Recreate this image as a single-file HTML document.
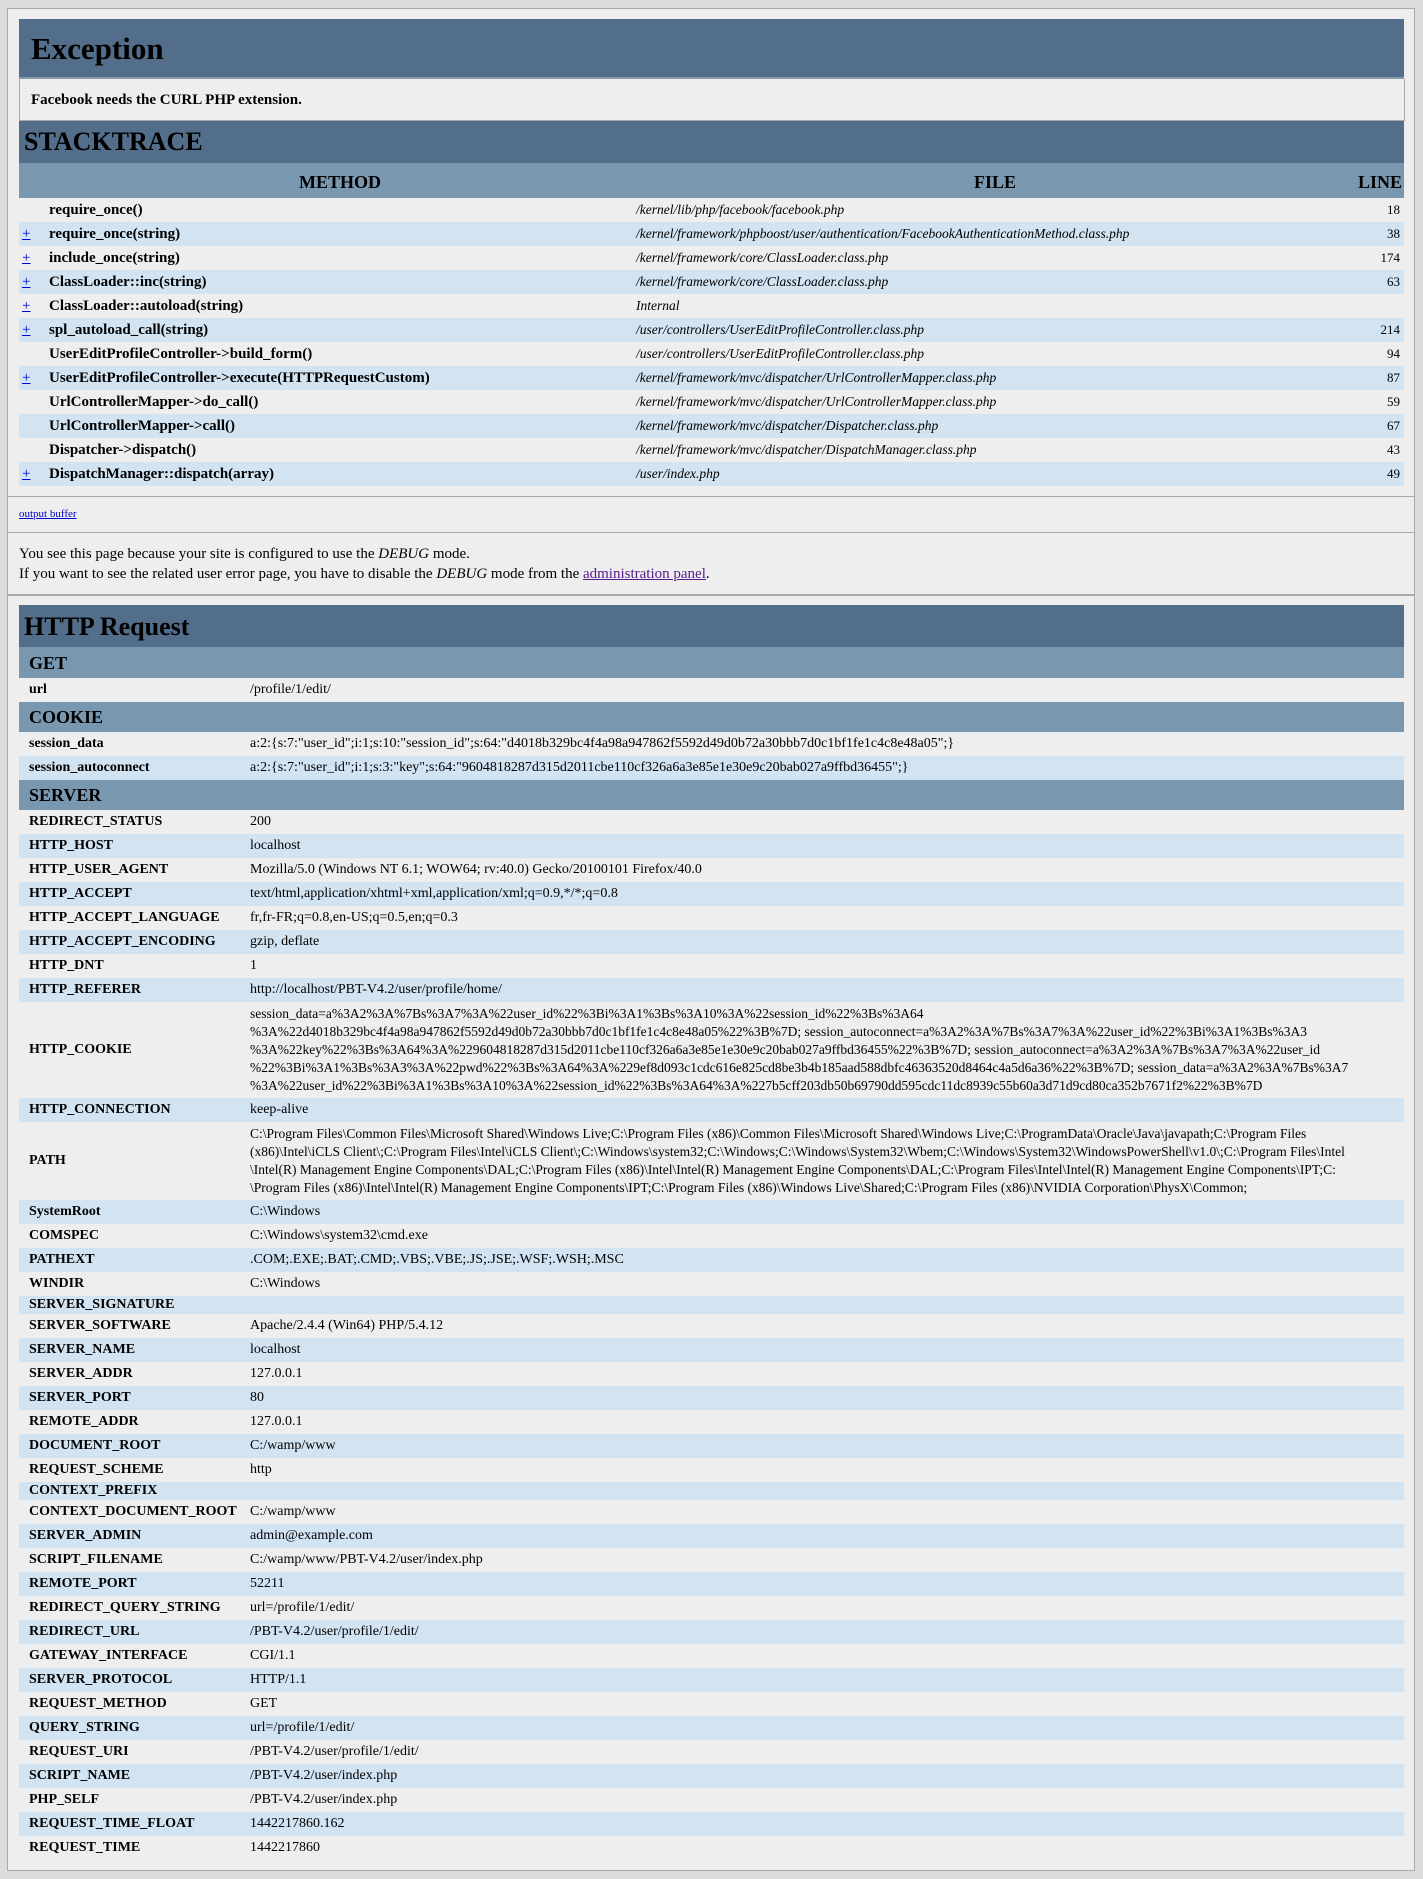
<!DOCTYPE html>
<html><head><meta charset="utf-8"><style>
html,body{margin:0;padding:0;background:#dcdcdc;}
body{width:1423px;height:1879px;position:relative;font-family:"Liberation Serif",serif;color:#000;}
#box{position:absolute;left:7px;top:8px;width:1406px;height:1861px;background:#eee;border:1px solid #aaa;}
.abs{position:absolute;}
.dark{background:#536e8a;}
.mid{background:#7a97b0;}
.blue{background:#d2e3f2;}
.row{position:absolute;left:19px;width:1385px;height:24px;font-size:15px;line-height:24px;white-space:nowrap;}
.row .plus{position:absolute;left:3px;color:#00c;text-decoration:underline;}
.row .m{position:absolute;left:30px;font-weight:bold;}
.row .f{position:absolute;left:617px;font-style:italic;font-size:13.5px;}
.row .l{position:absolute;right:4px;font-size:13px;}
table.kv{position:absolute;left:19px;width:1385px;border-collapse:collapse;font-size:14px;}
table.kv td{padding:0;height:24px;line-height:18px;vertical-align:middle;white-space:nowrap;}
table.kv td.k{font-weight:bold;width:221px;padding-left:10px;}
table.kv tr:nth-child(even){background:#d2e3f2;}
table.kv tr.e td{height:18px;}
</style></head><body>
<div id="box"></div>
<div class="abs dark" style="left:19px;top:19px;width:1385px;height:58px;border-bottom:2px solid #8a9aaa;"></div>
<div class="abs" style="left:31px;top:27px;font-size:31px;font-weight:bold;line-height:44px;">Exception</div>
<div class="abs" style="left:19px;top:79px;width:1384px;height:41px;border:1px solid #aaa;border-top:none;background:#eee;"></div>
<div class="abs" style="left:31px;top:90px;font-size:15px;font-weight:bold;line-height:20px;">Facebook needs the CURL PHP extension.</div>
<div class="abs dark" style="left:19px;top:121px;width:1385px;height:42px;"></div>
<div class="abs" style="left:24px;top:125px;font-size:26px;font-weight:bold;line-height:34px;">STACKTRACE</div>
<div class="abs mid" style="left:19px;top:163px;width:1385px;height:35px;font-size:18px;font-weight:bold;line-height:38px;">
<span class="abs" style="left:280px;">METHOD</span><span class="abs" style="left:955px;">FILE</span><span class="abs" style="right:2px;">LINE</span></div>

<div class="row" style="top:198px"><span class="m">require_once()</span><span class="f">/kernel/lib/php/facebook/facebook.php</span><span class="l">18</span></div>
<div class="row blue" style="top:222px"><span class="plus">+</span><span class="m">require_once(string)</span><span class="f">/kernel/framework/phpboost/user/authentication/FacebookAuthenticationMethod.class.php</span><span class="l">38</span></div>
<div class="row" style="top:246px"><span class="plus">+</span><span class="m">include_once(string)</span><span class="f">/kernel/framework/core/ClassLoader.class.php</span><span class="l">174</span></div>
<div class="row blue" style="top:270px"><span class="plus">+</span><span class="m">ClassLoader::inc(string)</span><span class="f">/kernel/framework/core/ClassLoader.class.php</span><span class="l">63</span></div>
<div class="row" style="top:294px"><span class="plus">+</span><span class="m">ClassLoader::autoload(string)</span><span class="f">Internal</span></div>
<div class="row blue" style="top:318px"><span class="plus">+</span><span class="m">spl_autoload_call(string)</span><span class="f">/user/controllers/UserEditProfileController.class.php</span><span class="l">214</span></div>
<div class="row" style="top:342px"><span class="m">UserEditProfileController-&gt;build_form()</span><span class="f">/user/controllers/UserEditProfileController.class.php</span><span class="l">94</span></div>
<div class="row blue" style="top:366px"><span class="plus">+</span><span class="m">UserEditProfileController-&gt;execute(HTTPRequestCustom)</span><span class="f">/kernel/framework/mvc/dispatcher/UrlControllerMapper.class.php</span><span class="l">87</span></div>
<div class="row" style="top:390px"><span class="m">UrlControllerMapper-&gt;do_call()</span><span class="f">/kernel/framework/mvc/dispatcher/UrlControllerMapper.class.php</span><span class="l">59</span></div>
<div class="row blue" style="top:414px"><span class="m">UrlControllerMapper-&gt;call()</span><span class="f">/kernel/framework/mvc/dispatcher/Dispatcher.class.php</span><span class="l">67</span></div>
<div class="row" style="top:438px"><span class="m">Dispatcher-&gt;dispatch()</span><span class="f">/kernel/framework/mvc/dispatcher/DispatchManager.class.php</span><span class="l">43</span></div>
<div class="row blue" style="top:462px"><span class="plus">+</span><span class="m">DispatchManager::dispatch(array)</span><span class="f">/user/index.php</span><span class="l">49</span></div>

<div class="abs" style="left:8px;top:496px;width:1406px;height:1px;background:#aaa;"></div>
<div class="abs" style="left:19px;top:507px;font-size:11px;line-height:14px;color:#00c;text-decoration:underline;">output buffer</div>
<div class="abs" style="left:8px;top:532px;width:1406px;height:1px;background:#aaa;"></div>
<div class="abs" style="left:19px;top:544px;font-size:15px;line-height:20px;">You see this page because your site is configured to use the <i>DEBUG</i> mode.<br>If you want to see the related user error page, you have to disable the <i>DEBUG</i> mode from the <span style="color:#551a8b;text-decoration:underline;">administration panel</span>.</div>
<div class="abs" style="left:8px;top:594px;width:1406px;height:2px;background:#aaa;"></div>

<div class="abs dark" style="left:19px;top:605px;width:1385px;height:42px;"></div>
<div class="abs" style="left:24px;top:610px;font-size:26px;font-weight:bold;line-height:34px;">HTTP Request</div>
<div class="abs mid" style="left:19px;top:647px;width:1385px;height:31px;"></div>
<div class="abs" style="left:29px;top:650px;font-size:18px;font-weight:bold;line-height:26px;">GET</div>
<table class="kv" style="top:678px"><tr><td class="k">url</td><td>/profile/1/edit/</td></tr></table>
<div class="abs mid" style="left:19px;top:702px;width:1385px;height:30px;"></div>
<div class="abs" style="left:29px;top:704px;font-size:18px;font-weight:bold;line-height:26px;">COOKIE</div>
<table class="kv" style="top:732px"><tr><td class="k">session_data</td><td>a:2:{s:7:"user_id";i:1;s:10:"session_id";s:64:"d4018b329bc4f4a98a947862f5592d49d0b72a30bbb7d0c1bf1fe1c4c8e48a05";}</td></tr><tr><td class="k">session_autoconnect</td><td>a:2:{s:7:"user_id";i:1;s:3:"key";s:64:"9604818287d315d2011cbe110cf326a6a3e85e1e30e9c20bab027a9ffbd36455";}</td></tr></table>
<div class="abs mid" style="left:19px;top:780px;width:1385px;height:30px;"></div>
<div class="abs" style="left:29px;top:782px;font-size:18px;font-weight:bold;line-height:26px;">SERVER</div>
<table class="kv" style="top:810px">
<tr><td class="k">REDIRECT_STATUS</td><td>200</td></tr>
<tr><td class="k">HTTP_HOST</td><td>localhost</td></tr>
<tr><td class="k">HTTP_USER_AGENT</td><td>Mozilla/5.0 (Windows NT 6.1; WOW64; rv:40.0) Gecko/20100101 Firefox/40.0</td></tr>
<tr><td class="k">HTTP_ACCEPT</td><td>text/html,application/xhtml+xml,application/xml;q=0.9,*/*;q=0.8</td></tr>
<tr><td class="k">HTTP_ACCEPT_LANGUAGE</td><td>fr,fr-FR;q=0.8,en-US;q=0.5,en;q=0.3</td></tr>
<tr><td class="k">HTTP_ACCEPT_ENCODING</td><td>gzip, deflate</td></tr>
<tr><td class="k">HTTP_DNT</td><td>1</td></tr>
<tr><td class="k">HTTP_REFERER</td><td>http://localhost/PBT-V4.2/user/profile/home/</td></tr>
<tr><td class="k" style="height:96px">HTTP_COOKIE</td><td style="font-size:13.5px">session_data=a%3A2%3A%7Bs%3A7%3A%22user_id%22%3Bi%3A1%3Bs%3A10%3A%22session_id%22%3Bs%3A64<br>%3A%22d4018b329bc4f4a98a947862f5592d49d0b72a30bbb7d0c1bf1fe1c4c8e48a05%22%3B%7D; session_autoconnect=a%3A2%3A%7Bs%3A7%3A%22user_id%22%3Bi%3A1%3Bs%3A3<br>%3A%22key%22%3Bs%3A64%3A%229604818287d315d2011cbe110cf326a6a3e85e1e30e9c20bab027a9ffbd36455%22%3B%7D; session_autoconnect=a%3A2%3A%7Bs%3A7%3A%22user_id<br>%22%3Bi%3A1%3Bs%3A3%3A%22pwd%22%3Bs%3A64%3A%229ef8d093c1cdc616e825cd8be3b4b185aad588dbfc46363520d8464c4a5d6a36%22%3B%7D; session_data=a%3A2%3A%7Bs%3A7<br>%3A%22user_id%22%3Bi%3A1%3Bs%3A10%3A%22session_id%22%3Bs%3A64%3A%227b5cff203db50b69790dd595cdc11dc8939c55b60a3d71d9cd80ca352b7671f2%22%3B%7D</td></tr>
<tr><td class="k">HTTP_CONNECTION</td><td>keep-alive</td></tr>
<tr><td class="k" style="height:78px">PATH</td><td style="font-size:13.5px">C:\Program Files\Common Files\Microsoft Shared\Windows Live;C:\Program Files (x86)\Common Files\Microsoft Shared\Windows Live;C:\ProgramData\Oracle\Java\javapath;C:\Program Files<br>(x86)\Intel\iCLS Client\;C:\Program Files\Intel\iCLS Client\;C:\Windows\system32;C:\Windows;C:\Windows\System32\Wbem;C:\Windows\System32\WindowsPowerShell\v1.0\;C:\Program Files\Intel<br>\Intel(R) Management Engine Components\DAL;C:\Program Files (x86)\Intel\Intel(R) Management Engine Components\DAL;C:\Program Files\Intel\Intel(R) Management Engine Components\IPT;C:<br>\Program Files (x86)\Intel\Intel(R) Management Engine Components\IPT;C:\Program Files (x86)\Windows Live\Shared;C:\Program Files (x86)\NVIDIA Corporation\PhysX\Common;</td></tr>
<tr><td class="k">SystemRoot</td><td>C:\Windows</td></tr>
<tr><td class="k">COMSPEC</td><td>C:\Windows\system32\cmd.exe</td></tr>
<tr><td class="k">PATHEXT</td><td>.COM;.EXE;.BAT;.CMD;.VBS;.VBE;.JS;.JSE;.WSF;.WSH;.MSC</td></tr>
<tr><td class="k">WINDIR</td><td>C:\Windows</td></tr>
<tr class="e"><td class="k">SERVER_SIGNATURE</td><td></td></tr>
<tr><td class="k">SERVER_SOFTWARE</td><td>Apache/2.4.4 (Win64) PHP/5.4.12</td></tr>
<tr><td class="k">SERVER_NAME</td><td>localhost</td></tr>
<tr><td class="k">SERVER_ADDR</td><td>127.0.0.1</td></tr>
<tr><td class="k">SERVER_PORT</td><td>80</td></tr>
<tr><td class="k">REMOTE_ADDR</td><td>127.0.0.1</td></tr>
<tr><td class="k">DOCUMENT_ROOT</td><td>C:/wamp/www</td></tr>
<tr><td class="k">REQUEST_SCHEME</td><td>http</td></tr>
<tr class="e"><td class="k">CONTEXT_PREFIX</td><td></td></tr>
<tr><td class="k">CONTEXT_DOCUMENT_ROOT</td><td>C:/wamp/www</td></tr>
<tr><td class="k">SERVER_ADMIN</td><td>admin@example.com</td></tr>
<tr><td class="k">SCRIPT_FILENAME</td><td>C:/wamp/www/PBT-V4.2/user/index.php</td></tr>
<tr><td class="k">REMOTE_PORT</td><td>52211</td></tr>
<tr><td class="k">REDIRECT_QUERY_STRING</td><td>url=/profile/1/edit/</td></tr>
<tr><td class="k">REDIRECT_URL</td><td>/PBT-V4.2/user/profile/1/edit/</td></tr>
<tr><td class="k">GATEWAY_INTERFACE</td><td>CGI/1.1</td></tr>
<tr><td class="k">SERVER_PROTOCOL</td><td>HTTP/1.1</td></tr>
<tr><td class="k">REQUEST_METHOD</td><td>GET</td></tr>
<tr><td class="k">QUERY_STRING</td><td>url=/profile/1/edit/</td></tr>
<tr><td class="k">REQUEST_URI</td><td>/PBT-V4.2/user/profile/1/edit/</td></tr>
<tr><td class="k">SCRIPT_NAME</td><td>/PBT-V4.2/user/index.php</td></tr>
<tr><td class="k">PHP_SELF</td><td>/PBT-V4.2/user/index.php</td></tr>
<tr><td class="k">REQUEST_TIME_FLOAT</td><td>1442217860.162</td></tr>
<tr><td class="k">REQUEST_TIME</td><td>1442217860</td></tr>
</table>
</body></html>
